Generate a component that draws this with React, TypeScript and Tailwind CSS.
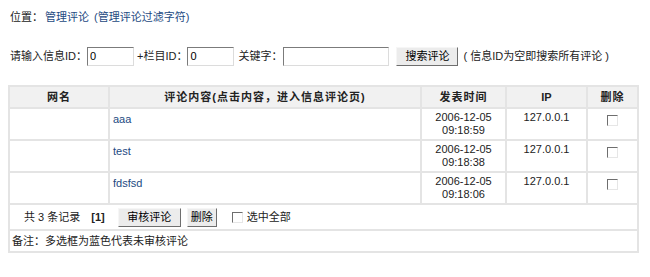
const rows = [
  { content: "aaa", date: "2006-12-05", time: "09:18:59", ip: "127.0.0.1" },
  { content: "test", date: "2006-12-05", time: "09:18:38", ip: "127.0.0.1" },
  { content: "fdsfsd", date: "2006-12-05", time: "09:18:06", ip: "127.0.0.1" },
];

function Input({ value, w }: { value: string; w: string }) {
  return (
    <input
      readOnly
      value={value}
      className={`${w} h-[19px] border border-t-[#7b7b7b] border-l-[#7b7b7b] border-r-[#dcdcdc] border-b-[#dcdcdc] bg-white px-[2px] text-[11px] text-black outline-none`}
    />
  );
}

function Button({ label, w }: { label: string; w: string }) {
  return (
    <button
      className={`${w} h-[19px] border border-t-[#f6f6f6] border-l-[#f6f6f6] border-r-[#6e6e6e] border-b-[#6e6e6e] bg-[#ececec] text-[11px] leading-[17px] text-black`}
    >
      {label}
    </button>
  );
}

function Box() {
  return (
    <span className="inline-block h-[11px] w-[11px] border border-t-[#6e6e6e] border-l-[#6e6e6e] border-r-[#e6e6e6] border-b-[#e6e6e6] bg-white" />
  );
}

const cell = "border-2 border-[#e4e4e4]";

export default function App() {
  return (
    <div
      className="h-[277px] w-[650px] bg-white text-[11px] text-[#222]"
      style={{ fontFamily: '"Liberation Sans", "Noto Sans CJK SC", sans-serif' }}
    >
      <div className="flex h-[34px] items-center pl-[10px]">
        <span>位置：</span>
        <span className="ml-[2px] text-[#1d4a82]">管理评论</span>
        <span className="ml-[5px] text-[#1d4a82]">(管理评论过滤字符)</span>
      </div>

      <div className="mt-[12px] flex h-[20px] items-center pl-[10px]">
        <span>请输入信息ID：</span>
        <Input value="0" w="w-[47px]" />
        <span className="ml-[3px]">+栏目ID：</span>
        <Input value="0" w="w-[47px]" />
        <span className="ml-[4px]">关键字：</span>
        <Input value="" w="w-[106px] ml-[1px]" />
        <Button label="搜索评论" w="w-[62px] ml-[7px]" />
        <span className="ml-[5px]">( 信息ID为空即搜索所有评论 )</span>
      </div>

      <table className="mt-[19px] ml-[8px] w-[631px] border-collapse border border-[#d8d8d8]">
        <thead>
          <tr className="h-[22px] bg-[#f1f1f1]">
            <th className={`w-[100px] ${cell} font-bold tracking-[1px]`}>网名</th>
            <th className={`w-[312px] ${cell} font-bold tracking-[1px]`}>评论内容(点击内容，进入信息评论页)</th>
            <th className={`w-[85px] ${cell} font-bold tracking-[1px]`}>发表时间</th>
            <th className={`w-[81px] ${cell} font-bold`}>IP</th>
            <th className={`${cell} font-bold tracking-[1px]`}>删除</th>
          </tr>
        </thead>
        <tbody>
          {rows.map((r) => (
            <tr key={r.content} className="h-[32px] align-top">
              <td className={cell} />
              <td className={`${cell} pl-[3px] pt-[2px] text-[#1d4a82]`}>{r.content}</td>
              <td className={`${cell} pt-[2px] text-center leading-[13px]`}>
                <div>{r.date}</div>
                <div>{r.time}</div>
              </td>
              <td className={`${cell} pt-[2px] text-center leading-[13px]`}>{r.ip}</td>
              <td className={`${cell} pt-[5px] text-center`}>
                <Box />
              </td>
            </tr>
          ))}
          <tr className="h-[26px]">
            <td colSpan={5} className={`${cell} pl-[14px]`}>
              <div className="flex items-center">
                <span>共 3 条记录</span>
                <span className="ml-[11px] font-bold">[1]</span>
                <Button label="审核评论" w="w-[63px] ml-[13px]" />
                <Button label="删除" w="w-[30px] ml-[6px]" />
                <span className="ml-[15px] flex items-center">
                  <Box />
                </span>
                <span className="ml-[4px]">选中全部</span>
              </div>
            </td>
          </tr>
          <tr className="h-[22px]">
            <td colSpan={5} className={`${cell} pl-[2px]`}>
              备注：多选框为蓝色代表未审核评论
            </td>
          </tr>
        </tbody>
      </table>
    </div>
  );
}
